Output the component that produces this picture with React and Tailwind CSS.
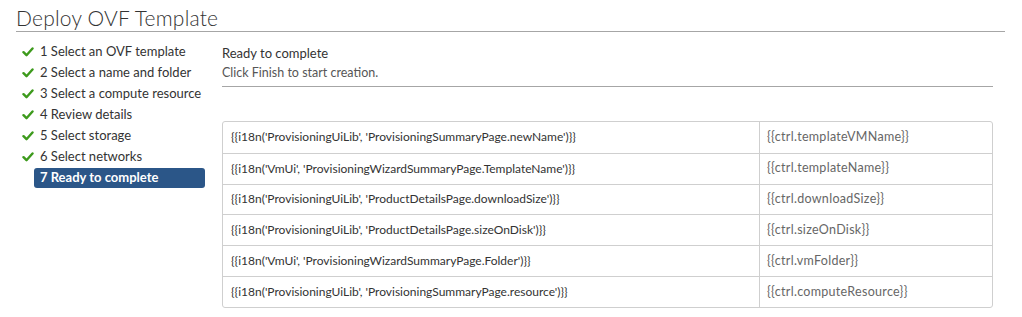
import React from 'react';

const steps = [
    '1 Select an OVF template',
    '2 Select a name and folder',
    '3 Select a compute resource',
    '4 Review details',
    '5 Select storage',
    '6 Select networks',
];

const rows = [
    ["{{i18n('ProvisioningUiLib', 'ProvisioningSummaryPage.newName')}}", '{{ctrl.templateVMName}}'],
    ["{{i18n('VmUi', 'ProvisioningWizardSummaryPage.TemplateName')}}", '{{ctrl.templateName}}'],
    ["{{i18n('ProvisioningUiLib', 'ProductDetailsPage.downloadSize')}}", '{{ctrl.downloadSize}}'],
    ["{{i18n('ProvisioningUiLib', 'ProductDetailsPage.sizeOnDisk')}}", '{{ctrl.sizeOnDisk}}'],
    ["{{i18n('VmUi', 'ProvisioningWizardSummaryPage.Folder')}}", '{{ctrl.vmFolder}}'],
    ["{{i18n('ProvisioningUiLib', 'ProvisioningSummaryPage.resource')}}", '{{ctrl.computeResource}}'],
];

const Check = () => (
    <svg width="12" height="10" viewBox="0 0 12 10" className="shrink-0">
        <path d="M1.5 5.2 L4.5 8.2 L10.5 1.5" fill="none" stroke="#3d9a1c" strokeWidth="2.4" strokeLinecap="round" strokeLinejoin="round" />
    </svg>
);

export default function App() {
    return (
        <div className="w-[1022px] h-[317px] bg-white text-[#333] font-['Lato','Open_Sans',sans-serif] overflow-hidden">
            {/* Header */}
            <div className="pl-[16px] pr-[17px] pt-[5px]">
                <h1 className="text-[21px] font-light leading-[26px] text-[#333] tracking-[0.2px]">Deploy OVF Template</h1>
                <div className="border-b border-[#a6a6a6]" />
            </div>

            <div className="flex pt-[9px]">
                {/* Steps */}
                <div className="w-[222px] shrink-0 pl-[22px] pr-[17px]">
                    {steps.map((s) => (
                        <div key={s} className="flex items-center h-[21px] gap-[6px] text-[13px] text-[#333]">
                            <Check />
                            <span>{s}</span>
                        </div>
                    ))}
                    <div className="ml-[12px] h-[20px] mt-[1px] rounded-[3px] bg-[#2b5688] text-white font-bold text-[13px] pl-[6px] flex items-center">
                        7 Ready to complete
                    </div>
                </div>

                {/* Content */}
                <div className="w-[771px]">
                    <div className="text-[13px] leading-[16px] text-[#333] mt-[4px]">Ready to complete</div>
                    <div className="text-[12.5px] leading-[16px] text-[#565656] mt-[4px]">Click Finish to start creation.</div>
                    <div className="mt-[5px] border-b border-[#a6a6a6]" />

                    <div className="mt-[34px] border border-[#cfcfcf] rounded-[3px] text-[12px]">
                        {rows.map(([k, v], i) => (
                            <div key={k} className={`flex h-[30.8px] items-center ${i > 0 ? 'border-t border-[#cfcfcf]' : ''}`}>
                                <div className="w-[537px] h-full flex items-center pl-[8px] text-[#333] border-r border-[#cfcfcf]">{k}</div>
                                <div className="flex-1 pl-[7px] text-[#666] text-[12.5px] tracking-[0.3px]">{v}</div>
                            </div>
                        ))}
                    </div>
                </div>
            </div>
        </div>
    );
}
